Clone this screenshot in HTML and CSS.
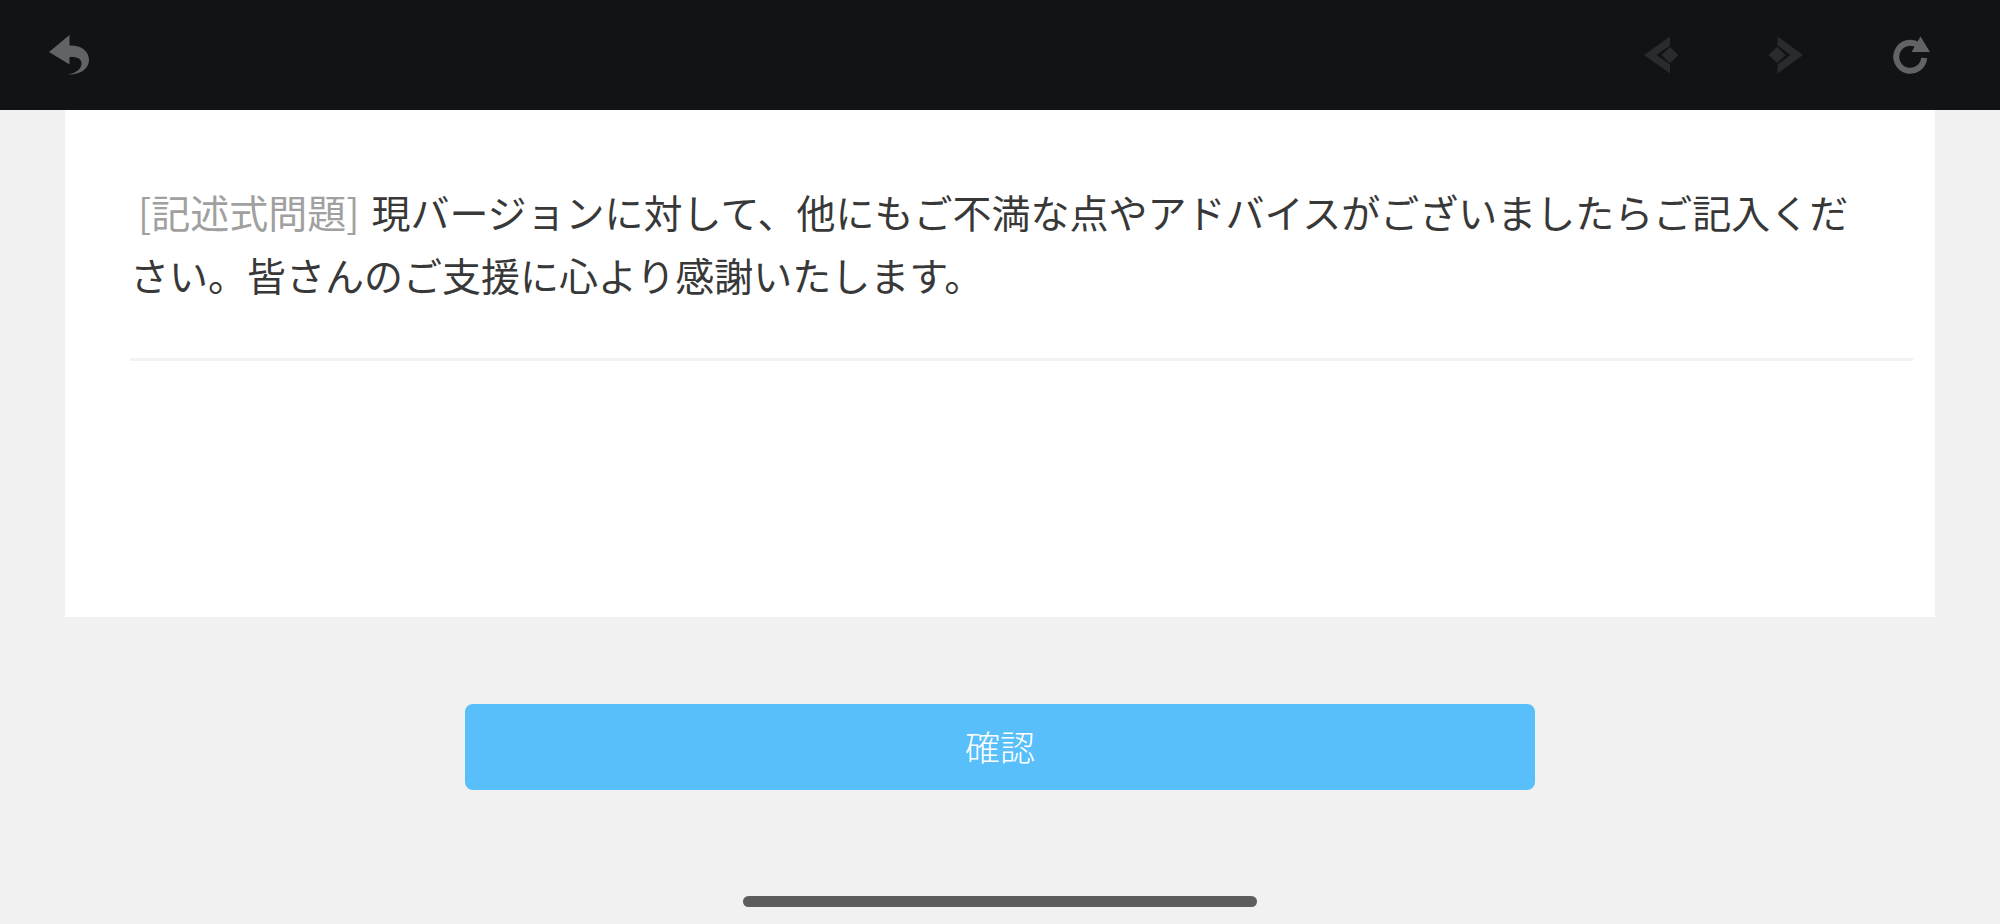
FILE: index.html
```
<!DOCTYPE html>
<html lang="ja">
<head>
  <meta charset="UTF-8" />
  <meta name="viewport" content="width=device-width,initial-scale=1.0" />
  <title>アンケート</title>
  <link rel="stylesheet" href="styles.css">
</head>
<body>
  <header class="toolbar">
    <button type="button" class="tool" aria-label="戻る">
      <svg viewBox="0 0 40 40"><path d="M0 17L20.500 0V10.500C32 10 40 16 40 25C40 33 32 40 19 39.500C27 38 32.500 34 32.500 28.500C32.500 23.500 28 21.500 20.500 22V29.500Z"/></svg>
    </button>
    <nav class="tools">
      <button type="button" class="tool" aria-label="前へ" disabled>
        <svg viewBox="0 0 40 40"><path d="M4 20L30 1.500V10.500L16.500 20L30 29.500V38.500ZM21.500 20L30 12L38.500 20L30 28Z"/></svg>
      </button>
      <button type="button" class="tool" aria-label="次へ" disabled>
        <svg viewBox="0 0 40 40"><path d="M38 20L12.500 1.500V10.500L25.500 20L12.500 29.500V38.500ZM20.500 20L12 12L3.500 20L12 28Z"/></svg>
      </button>
      <button type="button" class="tool" aria-label="再読み込み">
        <svg viewBox="0 0 40 40">
          <path class="ring" d="M34.200 23A14 14 0 1 1 28.500 10.500"/>
          <path d="M30.500 1.500L40 17H21.500Z"/>
        </svg>
      </button>
    </nav>
  </header>
  <main>
    <form id="survey" autocomplete="off">
      <section class="card">
        <label class="question" for="answer"><span class="tag">[記述式問題]</span>現バージョンに対して、他にもご不満な点やアドバイスがございましたらご記入ください。皆さんのご支援に心より感謝いたします。</label>
        <textarea id="answer" name="answer"></textarea>
      </section>
      <button type="submit" class="submit">確認</button>
    </form>
  </main>
  <div class="home-bar"></div>
  <script>
    document.getElementById('survey').addEventListener('submit', function(e) {
      e.preventDefault();
    });
  </script>
</body>
</html>
```
FILE: styles.css
```
* {
  box-sizing: border-box;
}
body {
  background: #f1f1f1;
  color: #383838;
  font-family: 'Noto Sans CJK JP', sans-serif;
  margin: 0;
  display: flex;
  flex-direction: column;
  min-height: 100vh;
}
.toolbar {
  display: flex;
  align-items: center;
  justify-content: space-between;
  height: 110px;
  padding: 0 70px 0 49px;
  background: #121315;
}
.tools {
  display: flex;
  gap: 85px;
}
.tool {
  width: 40px;
  height: 40px;
  padding: 0;
  border: none;
  background: none;
  color: #626364;
}
.tool:disabled {
  color: #2a2b2d;
}
.tool svg {
  display: block;
  width: 100%;
  height: 100%;
  fill: currentColor;
}
.tool .ring {
  fill: none;
  stroke: currentColor;
  stroke-width: 6;
}
main {
  flex: 1;
  padding: 0 65px;
}
.card {
  padding: 70px 22px 0 65px;
  background: #fff;
}
.question {
  display: block;
  padding-right: 43px;
  font-size: 39px;
  line-height: 63px;
}
.tag {
  margin: 0 12px 0 8px;
  color: #a0a0a0;
}
textarea {
  display: block;
  width: 100%;
  height: 259px;
  margin-top: 52px;
  padding: 20px 0;
  border: none;
  border-top: 3px solid #f2f2f2;
  outline: none;
  resize: none;
  background: none;
  color: inherit;
  font: inherit;
  font-size: 35px;
}
.submit {
  display: block;
  width: 1070px;
  max-width: 100%;
  height: 86px;
  margin: 87px auto 0;
  padding: 0 0 4px;
  border: none;
  border-radius: 8px;
  background: #58bffa;
  color: #fff;
  font: inherit;
  font-size: 35px;
  font-weight: 300;
}
.home-bar {
  width: 514px;
  max-width: 60%;
  height: 11px;
  margin: 0 auto 17px;
  border-radius: 6px;
  background: #5c5c5c;
}
```
